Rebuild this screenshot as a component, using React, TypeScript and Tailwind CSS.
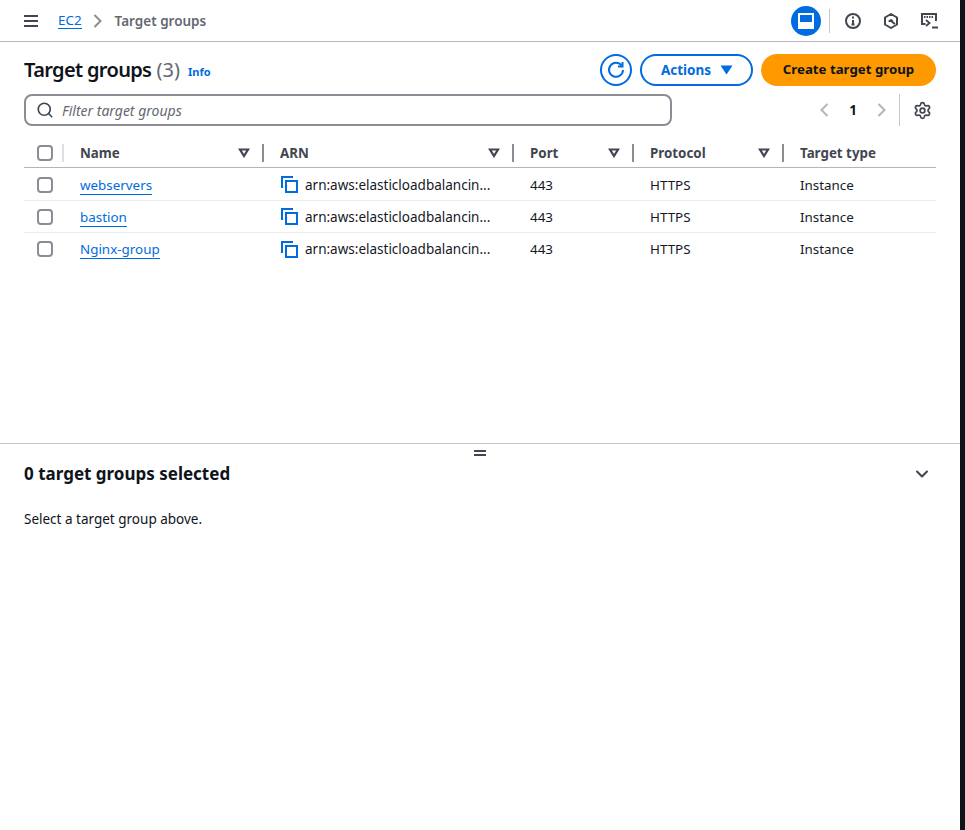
import { ChevronDown, Search, Settings } from 'lucide-react'

const rows = ['webservers', 'bastion', 'Nginx-group']

const columns = [
  { label: 'Name', width: 'w-[200px]', filter: true },
  { label: 'ARN', width: 'w-[250px]', filter: true },
  { label: 'Port', width: 'w-[120px]', filter: true },
  { label: 'Protocol', width: 'w-[150px]', filter: true },
  { label: 'Target type', width: 'flex-1', filter: false },
]

export default function App() {
  return (
    <div className="flex h-[830px] w-[965px] overflow-hidden bg-[#0f141a] font-['Noto_Sans',sans-serif] text-[13.4px] text-[#16191f]">
      <div className="flex w-[960px] flex-col bg-white">
        <TopBar />
        <div className="relative flex h-[402px] flex-col border-b border-[#c6c6cd] px-6">
          <PageHeader />
          <FilterRow />
          <TargetTable />
        </div>
        <SplitPanel />
      </div>
    </div>
  )
}

function TopBar() {
  return (
    <header className="flex h-[42px] shrink-0 items-center border-b border-[#b4b4bb] pl-6 pr-[22px] pt-px">
      <MenuIcon />
      <a className="ml-[20px] border-b border-[#006ce0] leading-[15px] text-[#006ce0]">EC2</a>
      <Chevron dir="right" color="#8c8c94" className="ml-[11px]" />
      <span className="ml-[12px] text-[13.5px] font-semibold text-[#656871]">Target groups</span>
      <div className="ml-auto flex items-center">
        <span className="flex h-[30px] w-[30px] items-center justify-center rounded-full bg-[#006ce0]">
          <PanelIcon />
        </span>
        <span className="ml-[8px] h-6 w-px bg-[#c6c6cd]" />
        <InfoIcon />
        <HexIcon />
        <ConsoleIcon />
      </div>
    </header>
  )
}

function PageHeader() {
  return (
    <div className="flex shrink-0 items-center pb-2 pt-3">
      <h1 className="text-[20px] font-semibold leading-[24px] text-[#0f141a]">
        <span className="tracking-[-0.65px]">Target groups</span>{' '}
        <span className="font-normal text-[#656871]">(3)</span>
      </h1>
      <a className="ml-[8px] mt-[5px] text-[11px] font-bold text-[#006ce0]">Info</a>
      <div className="ml-auto flex items-center gap-2">
        <button className="flex h-8 w-8 items-center justify-center rounded-full border-2 border-[#006ce0]">
          <RefreshIcon />
        </button>
        <button className="flex h-8 w-[113px] items-center justify-center gap-[9px] rounded-full border-2 border-[#006ce0] pl-px text-[13.5px] font-bold text-[#006ce0]">
          Actions
          <svg width="13" height="10" viewBox="0 0 13 10" aria-hidden="true">
            <path d="M0.5 0.5h12L6.5 9.5z" fill="#006ce0" />
          </svg>
        </button>
        <button className="h-8 w-[175px] rounded-full bg-[#ff9900] text-[13.25px] font-bold text-[#0f141a]">
          Create target group
        </button>
      </div>
    </div>
  )
}

function FilterRow() {
  return (
    <div className="flex h-8 shrink-0 items-center">
      <div className="flex h-8 w-[648px] items-center rounded-lg border-2 border-[#8c8c94] pl-[10px]">
        <Search size={18} strokeWidth={2.2} className="text-[#424650]" />
        <span className="ml-[8px] text-[14px] italic text-[#656871]">Filter target groups</span>
      </div>
      <div className="ml-auto flex items-center">
        <Chevron dir="left" color="#b4b4bb" />
        <span className="ml-[20px] w-[8px] text-center font-bold text-[#0f141a]">1</span>
        <Chevron dir="right" color="#b4b4bb" className="ml-[20px]" />
        <span className="ml-[12px] h-8 w-px bg-[#c6c6cd]" />
        <Settings size={19} strokeWidth={2.2} className="ml-[13px] mr-[4px] text-[#424650]" />
      </div>
    </div>
  )
}

function TargetTable() {
  return (
    <div className="mt-[12px]">
      <div className="mb-px flex h-[30px] items-center border-b border-[#b4b4bb]">
        <div className="flex h-[18px] w-10 shrink-0 items-center justify-between">
          <Checkbox />
          <span className="h-[18px] w-0.5 bg-[#dedee3]" />
        </div>
        {columns.map((col) => (
          <div key={col.label} className={`flex h-[18px] items-center ${col.width}`}>
            <span className="ml-[16px] text-[13.35px] font-bold text-[#424650]">{col.label}</span>
            {col.filter && (
              <>
                <SortIcon />
                <span className="ml-[12px] h-[18px] w-0.5 bg-[#8c8c94]" />
              </>
            )}
          </div>
        ))}
      </div>
      {rows.map((name) => (
        <div key={name} className="flex h-8 items-center border-b border-[#ebebf0] last:border-b-0">
          <div className="w-10 shrink-0">
            <Checkbox />
          </div>
          <div className="w-[200px] pl-[16px] pt-px">
            <a className="border-b border-[#006ce0] leading-[15px] text-[#006ce0]">{name}</a>
          </div>
          <div className="flex w-[250px] items-center pl-[17px]">
            <CopyIcon />
            <span className="ml-[7px] pt-px text-[13.5px]">arn:aws:elasticloadbalancin...</span>
          </div>
          <div className="w-[120px] pl-[16px] pt-px">443</div>
          <div className="w-[150px] pl-[16px] pt-px">HTTPS</div>
          <div className="flex-1 pl-[16px] pt-px">Instance</div>
        </div>
      ))}
    </div>
  )
}

function SplitPanel() {
  return (
    <section className="relative flex-1 px-6">
      <svg width="12" height="6" viewBox="0 0 12 6" className="absolute left-[474px] top-[6px]" aria-hidden="true">
        <path d="M0 1h12M0 5h12" stroke="#424650" strokeWidth="2" />
      </svg>
      <div className="flex items-center justify-between pt-[17px]">
        <h2 className="text-[17px] font-bold leading-[26px] text-[#0f141a]">0 target groups selected</h2>
        <ChevronDown size={20} strokeWidth={2.5} className="mr-[4px] text-[#424650]" />
      </div>
      <p className="mt-[23px] text-[13.5px] leading-[18px] text-[#0f141a]">Select a target group above.</p>
    </section>
  )
}

function Checkbox() {
  return <span className="ml-[13px] block h-4 w-4 rounded-[4px] border-2 border-[#8c8c94] bg-white" />
}

function Chevron({ dir, color, className }: { dir: 'left' | 'right'; color: string; className?: string }) {
  return (
    <svg width="10" height="14" viewBox="0 0 10 14" className={className} aria-hidden="true">
      <path d={dir === 'right' ? 'M1.5 1l6 6-6 6' : 'M8.5 1l-6 6 6 6'} fill="none" stroke={color} strokeWidth="2" />
    </svg>
  )
}

function SortIcon() {
  return (
    <svg width="12" height="10" viewBox="0 0 12 10" className="ml-auto" aria-hidden="true">
      <path d="M2 1.5h8L6 8z" fill="none" stroke="#424650" strokeWidth="2.2" />
    </svg>
  )
}

function MenuIcon() {
  return (
    <svg width="14" height="12" viewBox="0 0 14 12" aria-hidden="true">
      <path d="M0 1h14M0 6h14M0 11h14" stroke="#424650" strokeWidth="2" />
    </svg>
  )
}

function PanelIcon() {
  return (
    <svg width="16" height="16" viewBox="0 0 16 16" aria-hidden="true">
      <rect x="1" y="1" width="14" height="14" fill="none" stroke="#fff" strokeWidth="2" />
      <rect x="1" y="9" width="14" height="6" fill="#fff" />
    </svg>
  )
}

function InfoIcon() {
  return (
    <svg width="16" height="16" viewBox="0 0 16 16" className="ml-[15px]" aria-hidden="true">
      <circle cx="8" cy="8" r="7" fill="none" stroke="#424650" strokeWidth="2" />
      <path d="M8 7v5M6.5 11.5h3" stroke="#424650" strokeWidth="2" />
      <rect x="7" y="3.5" width="2" height="2" fill="#424650" />
    </svg>
  )
}

function HexIcon() {
  return (
    <svg width="16" height="16" viewBox="0 0 16 16" className="ml-[22px]" aria-hidden="true">
      <path d="M8 1l6 3.5v7L8 15l-6-3.5v-7z" fill="none" stroke="#424650" strokeWidth="2" strokeLinejoin="round" />
      <path d="M5.5 9V7.5L8 6l2.5 1.5L8 9z" fill="#424650" />
      <path d="M8 8l4 3" stroke="#424650" strokeWidth="2" />
    </svg>
  )
}

function ConsoleIcon() {
  return (
    <svg width="17" height="16" viewBox="0 0 17 16" className="ml-[22px]" aria-hidden="true">
      <path d="M4.5 11H1V1h14v7" fill="none" stroke="#424650" strokeWidth="2" />
      <path d="M3 4h9" stroke="#424650" strokeWidth="2" strokeDasharray="1.5 1" />
      <path d="M5 7l3.5 3L5 13M11 14.5h6" fill="none" stroke="#424650" strokeWidth="1.8" />
    </svg>
  )
}

function RefreshIcon() {
  return (
    <svg width="18" height="18" viewBox="0 0 18 18" aria-hidden="true">
      <path d="M14.5 4.5A7 7 0 1 0 16 9" fill="none" stroke="#006ce0" strokeWidth="2" />
      <path d="M15.5 1v4.5H11" fill="none" stroke="#006ce0" strokeWidth="2" />
    </svg>
  )
}

function CopyIcon() {
  return (
    <svg width="17" height="17" viewBox="0 0 17 17" aria-hidden="true">
      <path d="M1 12V1h11" fill="none" stroke="#006ce0" strokeWidth="2" />
      <rect x="5" y="5" width="11" height="11" fill="none" stroke="#006ce0" strokeWidth="2" />
    </svg>
  )
}
